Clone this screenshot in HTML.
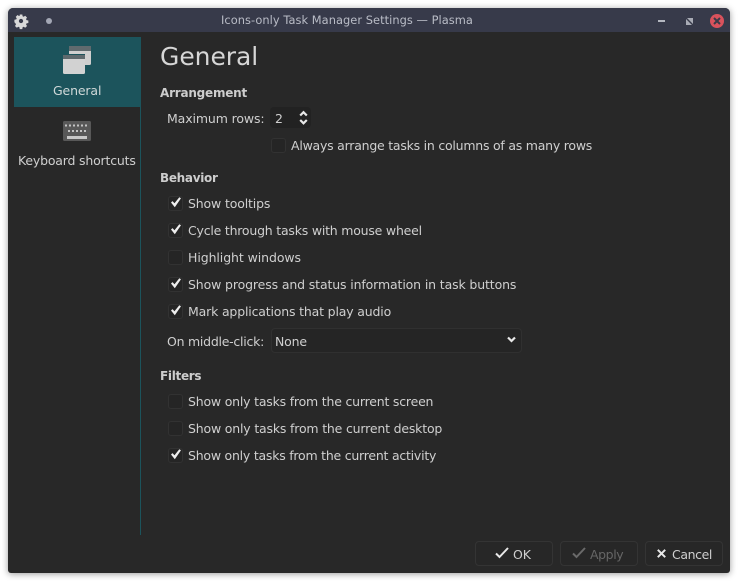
<!DOCTYPE html>
<html><head><meta charset="utf-8"><style>
html,body{margin:0;padding:0;width:738px;height:581px;overflow:hidden;background:#fff}
body{position:relative;font-family:"DejaVu Sans",sans-serif;font-size:12.5px;color:#cfcfcf}
#win{position:absolute;left:8px;top:8px;width:722px;height:565px;background:#282828;border-radius:5px 5px 3px 3px;box-shadow:0 1px 7px rgba(0,0,0,.4);overflow:hidden}
#tb{position:absolute;left:8px;top:8px;width:722px;height:24px;background:#373a4a;border-radius:5px 5px 0 0}
.t{position:absolute;white-space:nowrap;line-height:16px}
.b{font-weight:bold;color:#cdcdcd;font-size:12px}
.cb{position:absolute;width:13px;height:13px;background:#252525;border:1px solid #323232;border-radius:3px}
.cb svg{position:absolute;left:0;top:0}
.btn{position:absolute;top:541px;height:23px;background:#272727;border:1px solid #343434;border-radius:4px}
svg{position:absolute;overflow:visible}
</style></head><body>
<div id="win"></div>
<div id="tb"></div>

<svg style="left:14px;top:14px" width="14" height="14" viewBox="0 0 14 14"><path fill="#d8d8d8" fill-rule="evenodd" d="M5.6 0h2.800l.3 1.900 1.200.5L11.500 1.300l2 2-1.100 1.600.5 1.200 2 .3v2.800l-2 .3-.5 1.200 1.100 1.600-2 2-1.600-1.100-1.200.5-.3 2H5.600l-.3-2-1.200-.5-1.600 1.100-2-2 1.100-1.600-.5-1.200L-.1 8.400V5.600l2-.3.5-1.200L1.300 2.500l2-2 1.500 1.100 1-.5z M7 4.700a2.300 2.300 0 1 0 0 4.600a2.300 2.300 0 0 0 0-4.600z" transform="translate(.5 .5) scale(.93)"/></svg>
<div style="position:absolute;left:46px;top:18px;width:6px;height:6px;border-radius:50%;background:#a3a7b5"></div>
<div class="t" style="left:221px;top:12px;font-size:11.400px;color:#b9bcc6;letter-spacing:.05px">Icons-only Task Manager Settings — Plasma</div>
<div style="position:absolute;left:658px;top:20px;width:7px;height:2px;background:#b4b7c0"></div>
<svg style="left:686px;top:18px" width="7" height="7" viewBox="0 0 7 7"><path fill="#a8abb5" d="M0 7V1l6 6zM1 0h6v6z"/></svg>
<div style="position:absolute;left:710px;top:14px;width:14px;height:14px;border-radius:50%;background:#d9525c"></div>
<svg style="left:713px;top:17px" width="8" height="8" viewBox="0 0 8 8"><path stroke="#3a3a48" stroke-width="2" d="M1 1l6 6M7 1l-6 6"/></svg>

<div style="position:absolute;left:14px;top:37px;width:127px;height:70px;background:#1c545c"></div>
<div style="position:absolute;left:140px;top:107px;width:1px;height:428px;background:#1c545c"></div>
<svg style="left:63px;top:46px" width="29" height="29" viewBox="0 0 29 29">
<rect x="6" y="0" width="22" height="19" rx="1.500" fill="#cfcfcf"/><rect x="6" y="0" width="22" height="5" fill="#5f6a6e"/>
<rect x="0" y="9" width="22" height="19" rx="1.500" fill="#d2d2d2"/><rect x="0" y="9" width="22" height="4" fill="#5f6a6e"/>
<rect x="0" y="8" width="22" height="1" fill="#1c545c"/></svg>
<div class="t" style="left:53px;top:83px;color:#cfd8d8;letter-spacing:-.14px">General</div>
<svg style="left:63px;top:121px" width="28" height="20" viewBox="0 0 28 20">
<rect width="28" height="20" rx="1.500" fill="#585858"/>
<path stroke="#c4c4c4" stroke-width="2" stroke-dasharray="2 2" d="M2 4.500h24"/>
<path stroke="#c4c4c4" stroke-width="2" stroke-dasharray="2 2" d="M5 10h18"/>
<rect x="4" y="15" width="20" height="3" fill="#c8c8c8"/></svg>
<div class="t" style="left:18px;top:153px;letter-spacing:-.19px">Keyboard shortcuts</div>

<div class="t" style="left:160px;top:39px;font-size:25px;line-height:36px;color:#d6d6d6;letter-spacing:-.05px">General</div>
<div class="t b" style="left:160px;top:85px;letter-spacing:-.22px">Arrangement</div>
<div class="t" style="left:167px;top:111px;letter-spacing:-.12px">Maximum rows:</div>
<div style="position:absolute;left:270px;top:107px;width:41px;height:21px;background:#222;border-radius:4px"></div>
<div class="t" style="left:275px;top:111px">2</div>
<svg style="left:299px;top:110px" width="9" height="15" viewBox="0 0 9 15"><path fill="none" stroke="#e8e8e8" stroke-width="2.200" d="M1.200 5.500l3.300-3.300 3.300 3.300M1.200 10l3.300 3.300 3.300-3.300"/></svg>

<div class="cb" style="left:271px;top:138px"></div>
<div class="t" style="left:291px;top:138px;letter-spacing:-.23px">Always arrange tasks in columns of as many rows</div>

<div class="t b" style="left:160px;top:170px;letter-spacing:-.3px">Behavior</div>

<div class="cb" style="left:168px;top:196px"><svg width="13" height="13" viewBox="0 0 13 13"><path fill="#eee" d="M2 5.500l1.500-1.400 2 2.200L10.300.3l1.700.9L5.800 10.200z"/></svg></div>
<div class="t" style="left:188px;top:196px;letter-spacing:-.15px">Show tooltips</div>
<div class="cb" style="left:168px;top:223px"><svg width="13" height="13" viewBox="0 0 13 13"><path fill="#eee" d="M2 5.500l1.500-1.400 2 2.200L10.300.3l1.700.9L5.800 10.200z"/></svg></div>
<div class="t" style="left:188px;top:223px;letter-spacing:-.21px">Cycle through tasks with mouse wheel</div>
<div class="cb" style="left:168px;top:250px"></div>
<div class="t" style="left:188px;top:250px;letter-spacing:-.08px">Highlight windows</div>
<div class="cb" style="left:168px;top:277px"><svg width="13" height="13" viewBox="0 0 13 13"><path fill="#eee" d="M2 5.500l1.500-1.400 2 2.200L10.300.3l1.700.9L5.800 10.200z"/></svg></div>
<div class="t" style="left:188px;top:277px;letter-spacing:-.13px">Show progress and status information in task buttons</div>
<div class="cb" style="left:168px;top:304px"><svg width="13" height="13" viewBox="0 0 13 13"><path fill="#eee" d="M2 5.500l1.500-1.400 2 2.200L10.300.3l1.700.9L5.800 10.200z"/></svg></div>
<div class="t" style="left:188px;top:304px;letter-spacing:-.17px">Mark applications that play audio</div>

<div class="t" style="left:167px;top:334px;letter-spacing:-.25px">On middle-click:</div>
<div style="position:absolute;left:271px;top:328px;width:249px;height:23px;background:#252525;border:1px solid #303030;border-radius:4px"></div>
<div class="t" style="left:275px;top:334px;letter-spacing:-.2px">None</div>
<svg style="left:507px;top:336px" width="9" height="7" viewBox="0 0 9 7"><path fill="none" stroke="#e8e8e8" stroke-width="2.200" d="M1 1.500l3.500 3.500 3.500-3.500"/></svg>

<div class="t b" style="left:160px;top:368px;letter-spacing:-.3px">Filters</div>
<div class="cb" style="left:168px;top:394px"></div>
<div class="t" style="left:188px;top:394px;letter-spacing:-.2px">Show only tasks from the current screen</div>
<div class="cb" style="left:168px;top:421px"></div>
<div class="t" style="left:188px;top:421px;letter-spacing:-.18px">Show only tasks from the current desktop</div>
<div class="cb" style="left:168px;top:448px"><svg width="13" height="13" viewBox="0 0 13 13"><path fill="#eee" d="M2 5.500l1.500-1.400 2 2.200L10.300.3l1.700.9L5.800 10.200z"/></svg></div>
<div class="t" style="left:188px;top:448px;letter-spacing:-.23px">Show only tasks from the current activity</div>

<div class="btn" style="left:475px;width:76px"></div>
<svg style="left:495px;top:547px" width="14" height="12" viewBox="0 0 14 12"><path fill="none" stroke="#e8e8e8" stroke-width="2" d="M1 6.500l3.500 3.500L13 1"/></svg>
<div class="t" style="left:513px;top:547px;letter-spacing:-.1px">OK</div>
<div class="btn" style="left:560px;width:76px"></div>
<svg style="left:572px;top:547px" width="14" height="12" viewBox="0 0 14 12"><path fill="none" stroke="#6a6a6a" stroke-width="2" d="M1 6.500l3.500 3.500L13 1"/></svg>
<div class="t" style="left:590px;top:547px;color:#666;letter-spacing:-.4px">Apply</div>
<div class="btn" style="left:645px;width:76px"></div>
<svg style="left:657px;top:549px" width="9" height="9" viewBox="0 0 9 9"><path stroke="#e8e8e8" stroke-width="2" d="M.8.800l7.400 7.400M8.200.800L.8 8.200"/></svg>
<div class="t" style="left:672px;top:547px;letter-spacing:-.4px">Cancel</div>
</body></html>
